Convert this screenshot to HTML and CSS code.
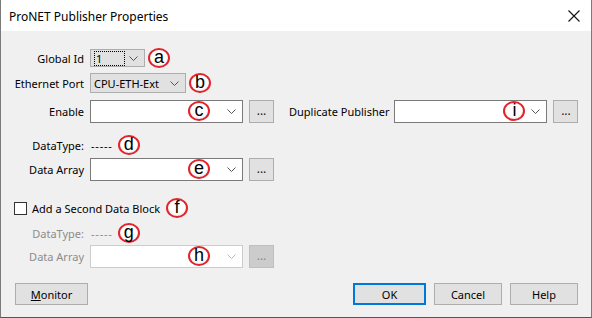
FILE: index.html
```html
<!DOCTYPE html>
<html lang="en">
 <head>
  <meta charset="UTF-8">
  <title>ProNET Publisher Properties</title>
  <link rel="stylesheet" href="styles.css">
 </head>
 <body>
 <div class="dialog">
	<div class="titlebar">
		<span class="title">ProNET Publisher Properties</span>
		<svg class="close" width="12" height="12" viewBox="0 0 12 12"><path d="M0.5 0.5 L11.5 11.5 M11.5 0.5 L0.5 11.5" stroke="#111" stroke-width="1.1" fill="none"/></svg>
	</div>
	<div class="content">
		<div class="row r-global">
			<span class="lbl">Global Id</span>
			<div class="combo ro w-id"><span class="val"><span class="focus">1</span></span><svg class="chev" width="9" height="5" viewBox="0 0 9 5"><path d="M0.5 0.5 L4.5 4.5 L8.5 0.5" stroke="#555" fill="none"/></svg></div>
			<span class="badge">a</span>
		</div>
		<div class="row r-port">
			<span class="lbl">Ethernet Port</span>
			<div class="combo ro w-port"><span class="val">CPU-ETH-Ext</span><svg class="chev" width="9" height="5" viewBox="0 0 9 5"><path d="M0.5 0.5 L4.5 4.5 L8.5 0.5" stroke="#555" fill="none"/></svg></div>
			<span class="badge">b</span>
		</div>
		<div class="row r-enable">
			<span class="lbl">Enable</span>
			<div class="combo ed w-main"><span class="val"></span><span class="badge over">c</span><svg class="chev" width="9" height="5" viewBox="0 0 9 5"><path d="M0.5 0.5 L4.5 4.5 L8.5 0.5" stroke="#555" fill="none"/></svg></div>
			<button class="dots">...</button>
			<span class="lbl2">Duplicate Publisher</span>
			<div class="combo ed w-main"><span class="val"></span><span class="badge over over-i">i</span><svg class="chev" width="9" height="5" viewBox="0 0 9 5"><path d="M0.5 0.5 L4.5 4.5 L8.5 0.5" stroke="#555" fill="none"/></svg></div>
			<button class="dots">...</button>
		</div>
		<div class="row r-type">
			<span class="lbl">DataType:</span>
			<span class="dash">-----</span>
			<span class="badge">d</span>
		</div>
		<div class="row r-array">
			<span class="lbl">Data Array</span>
			<div class="combo ed w-main"><span class="val"></span><span class="badge over">e</span><svg class="chev" width="9" height="5" viewBox="0 0 9 5"><path d="M0.5 0.5 L4.5 4.5 L8.5 0.5" stroke="#555" fill="none"/></svg></div>
			<button class="dots">...</button>
		</div>
		<div class="row r-check">
			<span class="box"></span>
			<span class="check-lbl">Add a Second Data Block</span>
			<span class="badge">f</span>
		</div>
		<div class="row r-type2 off">
			<span class="lbl">DataType:</span>
			<span class="dash">-----</span>
			<span class="badge">g</span>
		</div>
		<div class="row r-array2 off">
			<span class="lbl">Data Array</span>
			<div class="combo ed dis w-main"><span class="val"></span><span class="badge over">h</span><svg class="chev" width="9" height="5" viewBox="0 0 9 5"><path d="M0.5 0.5 L4.5 4.5 L8.5 0.5" stroke="#BBB" fill="none"/></svg></div>
			<button class="dots dis">...</button>
		</div>
	</div>
	<div class="footer">
		<button class="btn"><u>M</u>onitor</button>
		<span class="spacer"></span>
		<button class="btn default">OK</button>
		<button class="btn">Cancel</button>
		<button class="btn">Help</button>
	</div>
 </div>
 </body>
</html>
```

FILE: styles.css
```css
	body{
		padding:0;
		margin:0;
		background:#F0F0F0;
		font-family:"Noto Sans", "Open Sans", sans-serif;
		font-size:11px;
		color:#000;
	}
	.dialog{
		width:590px;
		height:317px;
		border-left:1px solid #7A7A7A;
		border-right:1px solid #7A7A7A;
		border-bottom:1px solid #555;
		background:#F0F0F0;
		display:flex;
		flex-direction:column;
	}
	.titlebar{
		height:31px;
		background:#FFFFFF;
		display:flex;
		align-items:center;
		padding-left:8px;
		padding-right:10px;
	}
	.title{
		font-size:12px;
		flex:1;
		padding-top:1px;
	}
	.close{
		margin-right:1px;
	}
	.content{
		padding-top:18px;
		display:flex;
		flex-direction:column;
	}
	.row{
		display:flex;
		align-items:center;
	}
	.lbl{
		width:83px;
		text-align:right;
		margin-right:6px;
	}
	.lbl2{
		margin-left:15px;
		margin-right:5px;
	}
	.r-global{ height:18px; }
	.r-port{ height:20px; margin-top:6px; }
	.r-enable{ height:23px; margin-top:7px; }
	.r-type{ height:18px; margin-top:13px; }
	.r-array{ height:23px; margin-top:4px; }
	.r-check{ height:18px; margin-top:18px; }
	.r-type2{ height:18px; margin-top:7px; }
	.r-array2{ height:23px; margin-top:3px; }

	.combo{
		position:relative;
		box-sizing:border-box;
		height:100%;
		display:flex;
		align-items:center;
		border:1px solid #ADADAD;
	}
	.combo .val{
		flex:1;
		padding-left:3px;
	}
	.chev{
		margin-right:6px;
	}
	.ro{
		background:#E1E1E1;
	}
	.ed{
		background:#FFFFFF;
		border-color:#7A7A7A;
	}
	.ed.dis{
		border-color:#CCCCCC;
	}
	.w-id{ width:55px; }
	.w-port{ width:96px; }
	.w-main{ width:153px; }
	.focus{
		display:inline-block;
		width:28px;
		border:1px dotted #000;
		padding-left:1px;
		line-height:13px;
	}
	.dots{
		box-sizing:border-box;
		width:25px;
		height:23px;
		margin-left:6px;
		padding:0 0 3px 0;
		background:#E1E1E1;
		border:1px solid #ADADAD;
		font-family:inherit;
		font-size:12px;
		color:#222;
	}
	.dots.dis{
		background:#CCCCCC;
		border-color:#BFBFBF;
		color:#8C8C8C;
	}
	.badge{
		box-sizing:border-box;
		display:inline-flex;
		align-items:center;
		justify-content:center;
		width:22px;
		height:20px;
		margin-left:3px;
		border:2px solid #E3232B;
		border-radius:50%;
		background:radial-gradient(circle at 50% 35%, #FFFFFF 55%, #D8D8D8 100%);
		font-family:"Liberation Sans", Arial, sans-serif;
		font-size:18px;
		line-height:1;
		color:#000;
		padding-bottom:2px;
	}
	.badge.over{
		position:absolute;
		left:97px;
		top:0;
		margin-left:0;
	}
	.badge.over-i{
		left:108px;
	}
	.dash{
		margin-left:1px;
		letter-spacing:0.8px;
	}
	.r-type .badge, .r-type2 .badge{
		margin-left:5px;
	}
	.box{
		box-sizing:border-box;
		width:13px;
		height:13px;
		margin-left:13px;
		border:1px solid #333;
		background:#FFFFFF;
	}
	.check-lbl{
		margin-left:5px;
	}
	.r-check .badge{
		margin-left:6px;
	}
	.off .lbl, .off .dash{
		color:#8C8C8C;
	}
	.footer{
		display:flex;
		margin-top:15px;
		padding-left:14px;
		padding-right:13px;
		gap:8px;
	}
	.spacer{
		flex:1;
	}
	.btn{
		box-sizing:border-box;
		width:73px;
		height:22px;
		background:#E1E1E1;
		border:1px solid #ADADAD;
		font-family:inherit;
		font-size:11px;
		color:#000;
		padding:0;
	}
	.footer .btn + .btn{
		width:68px;
	}
	.btn.default{
		border-color:#0078D7;
		box-shadow:inset 0 0 0 1px #0078D7;
	}
```
